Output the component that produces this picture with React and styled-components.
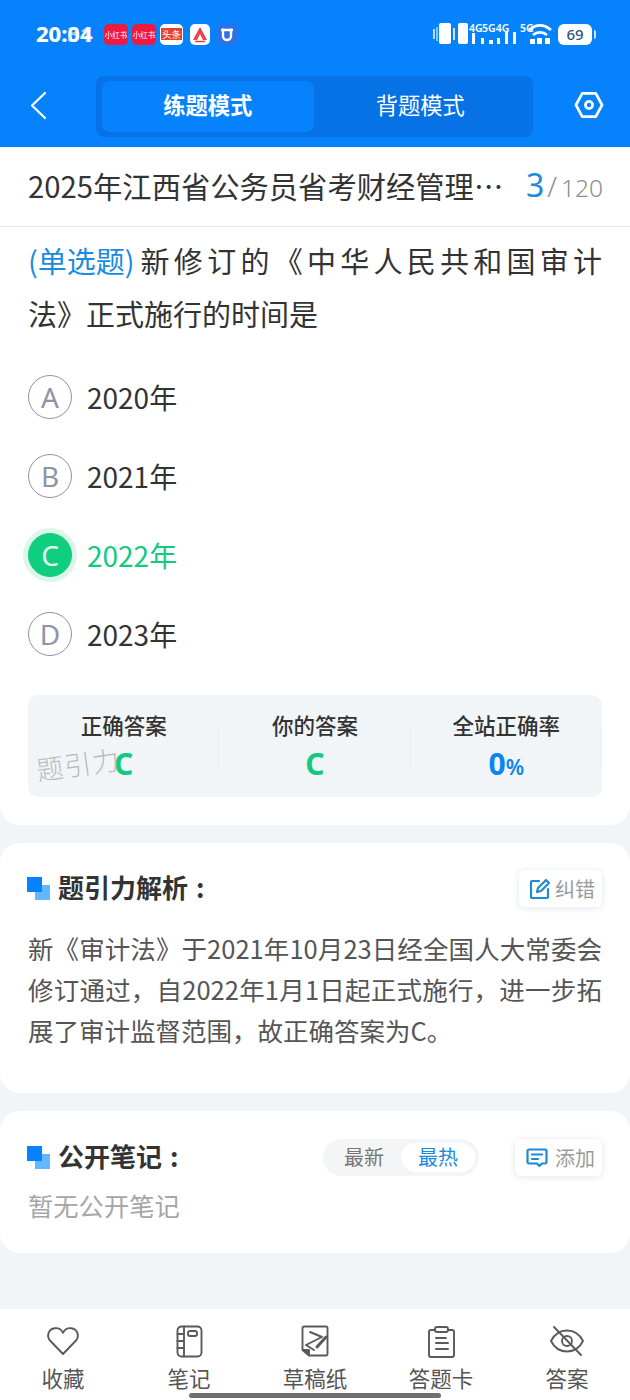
import React from "react";
import styled, { createGlobalStyle } from "styled-components";

const GlobalStyle = createGlobalStyle`
  * { box-sizing: border-box; }
  html, body { margin: 0; padding: 0; background: #f1f5f8; }
  body { font-family: "Noto Sans CJK SC", "Noto Sans", sans-serif; }
`;

const Page = styled.div`
  position: relative;
  width: 630px;
  height: 1400px;
  display: flex;
  flex-direction: column;
  overflow: hidden;
  background: #f1f5f8;
  color: #333;
`;

const Header = styled.header`
  height: 147px;
  background: #0782fd;
  display: flex;
  flex-direction: column;
`;

const StatusBar = styled.div`
  height: 76px;
  padding: 24px 38px 0 36px;
  display: flex;
  align-items: flex-start;
  justify-content: space-between;
`;

const StatusLeft = styled.div`
  display: flex;
  align-items: center;
  height: 20px;
`;

const Time = styled.div`
  position: relative;
  width: 62px;
  margin-right: 6px;
  margin-top: -2px;
  font-family: "Noto Sans", sans-serif;
  font-size: 22px;
  line-height: 20px;
  font-weight: 700;
  color: #fff;
  white-space: nowrap;
`;

const GhostTime = styled.span`
  position: absolute;
  left: 0;
  top: 0;
  opacity: 0.6;
`;

const AppIcons = styled.div`
  display: flex;
  align-items: center;
`;

const AppIcon = styled.div`
  width: ${(p) => p.$w}px;
  height: 21px;
  margin-left: ${(p) => p.$ml || 0}px;
  border-radius: 5px;
  background: ${(p) => p.$bg};
  color: #fff;
  font-size: 7.5px;
  line-height: 21px;
  white-space: nowrap;
  overflow: hidden;
  display: flex;
  align-items: center;
  justify-content: center;
`;

const AppLabel = styled.span`
  padding: 0 1px;
  background: ${(p) => p.$bg || "transparent"};
  font-size: ${(p) => p.$fs || 7.5}px;
  line-height: 12px;
`;

const StatusRight = styled.div`
  display: flex;
  gap: 4px;
  align-items: flex-start;
`;

const StatusGlyphs = styled.svg`
  margin-top: -2px;
`;

const Battery = styled.div`
  position: relative;
  width: 34px;
  height: 21px;
  border-radius: 6px;
  background: #fff;
  color: #2a5580;
  font-family: "Noto Sans", sans-serif;
  font-size: 15px;
  font-weight: 500;
  line-height: 21px;
  text-align: center;

  &::after {
    content: "";
    position: absolute;
    right: -4px;
    top: 6px;
    width: 2px;
    height: 9px;
    border-radius: 0 2px 2px 0;
    background: rgba(255, 255, 255, 0.8);
  }
`;

const NavBar = styled.div`
  height: 71px;
  display: flex;
  align-items: flex-start;
  justify-content: space-between;
  padding: 0 26px 0 30px;
`;

const BackButton = styled.div`
  width: 20px;
  margin-top: 15px;
  display: flex;
`;

const ModeSwitch = styled.div`
  width: 437px;
  height: 61px;
  margin-left: 4px;
  padding: 5px 6px;
  border-radius: 8px;
  background: #0672e6;
  display: flex;
`;

const ModeTab = styled.div`
  flex: 1;
  border-radius: 8px;
  background: ${(p) => (p.$active ? "#0782fd" : "transparent")};
  color: #fff;
  font-size: 22.3px;
  font-weight: ${(p) => (p.$active ? 700 : 400)};
  line-height: 46px;
  text-align: center;
`;

const SettingsButton = styled.div`
  width: 30px;
  margin-top: 15px;
  display: flex;
`;

const TitleRow = styled.div`
  height: 80px;
  padding: 0 27px 4px 28px;
  display: flex;
  align-items: center;
  justify-content: space-between;
  background: #fff;
  border-bottom: 1px solid #e4e6e8;
`;

const PaperTitle = styled.div`
  font-size: 29.3px;
  color: #333;
  white-space: nowrap;
`;

const Progress = styled.div`
  display: flex;
  align-items: baseline;
  font-family: "Noto Sans", sans-serif;
  font-weight: 300;
  color: #8e8e8e;
  font-size: 24.5px;
`;

const ProgressCurrent = styled.span`
  color: #1a8ce0;
  font-size: 32px;
  font-weight: 400;
  margin-right: 3px;
`;

const ProgressSlash = styled.span`
  font-size: 28px;
  margin-right: 4px;
`;

const QuestionCard = styled.section`
  background: #fff;
  border-radius: 0 0 20px 20px;
  padding: 7px 28px 28px;
`;

const QuestionLine = styled.div`
  font-size: 29px;
  line-height: 53px;
  color: #333;
  text-spacing-trim: space-all;
  white-space: nowrap;
`;

const QuestionSpread = styled.div`
  display: flex;
  align-items: baseline;
  gap: 6px;
  font-size: 29px;
  line-height: 53px;
  color: #333;
  text-spacing-trim: space-all;
`;

const QuestionType = styled.span`
  flex: none;
  color: #1a8ce0;
`;

const QuestionStem = styled.span`
  flex: 1;
  text-align: justify;
  text-align-last: justify;
`;

const Options = styled.div`
  margin-top: 17px;
  display: flex;
  flex-direction: column;
`;

const OptionRow = styled.div`
  height: 79px;
  display: flex;
  align-items: center;
  gap: 15px;
  font-size: 28px;
  color: ${(p) => (p.$correct ? "#0fcb7f" : "#333")};
`;

const OptionLetter = styled.div`
  width: 44px;
  height: 44px;
  border-radius: 50%;
  border: 1px solid ${(p) => (p.$correct ? "#0fce7e" : "#8f93a8")};
  background: ${(p) => (p.$correct ? "#0fce7e" : "#fff")};
  box-shadow: ${(p) => (p.$correct ? "0 0 0 5px #dcf7ea" : "none")};
  color: ${(p) => (p.$correct ? "#e8fbf2" : "#8f93a8")};
  display: flex;
  align-items: center;
  justify-content: center;
  font-family: "Noto Sans", sans-serif;
  font-size: 28px;
  font-weight: 400;
`;

const Stats = styled.div`
  position: relative;
  margin-top: 22px;
  height: 102px;
  border-radius: 10px;
  background: #f1f5f8;
  display: grid;
  grid-template-columns: repeat(3, 1fr);
`;

const StatColumn = styled.div`
  position: relative;
  display: flex;
  flex-direction: column;
  align-items: center;
  padding-top: 14px;

  &:not(:last-child)::after {
    content: "";
    position: absolute;
    right: 0;
    top: 32px;
    height: 40px;
    width: 1px;
    background: #e8edf1;
  }
`;

const StatLabel = styled.div`
  font-size: 21.5px;
  line-height: 32px;
  font-weight: 500;
  color: #333;
`;

const StatValue = styled.div`
  margin-top: 5px;
  font-family: "Noto Sans", sans-serif;
  font-size: 30px;
  line-height: 36px;
  font-weight: 700;
  color: ${(p) => p.$color};
`;

const StatUnit = styled.span`
  font-size: 21px;
  font-weight: 600;
`;

const Watermark = styled.div`
  position: absolute;
  left: 8px;
  top: 51px;
  font-size: 27px;
  line-height: 36px;
  font-weight: 300;
  letter-spacing: 1px;
  color: #b9bcbe;
  transform: rotate(-8deg);
`;

const Card = styled.section`
  margin-top: 18px;
  height: ${(p) => p.$height}px;
  padding: ${(p) => p.$top}px 28px 0;
  background: #fff;
  border-radius: 20px;
`;

const CardHead = styled.div`
  display: flex;
  align-items: center;
  justify-content: space-between;
`;

const CardTitle = styled.div`
  display: flex;
  align-items: center;
  font-size: 26px;
  font-weight: 700;
  color: #333;
`;

const TitleMark = styled.div`
  position: relative;
  width: 23px;
  height: 23px;
  margin: 0 8px 0 -1px;

  &::before,
  &::after {
    content: "";
    position: absolute;
    width: 15px;
    height: 15px;
  }
  &::before {
    right: 0;
    bottom: 0;
    background: #62b8ff;
  }
  &::after {
    left: 0;
    top: 0;
    background: #0782fd;
  }
`;

const TitleText = styled.span`
  margin-top: -4px;
`;

const Colon = styled.span`
  margin-left: 8px;
`;

const SmallButton = styled.div`
  width: ${(p) => p.$w}px;
  height: 37px;
  padding-right: 7px;
  border-radius: 6px;
  background: #fff;
  box-shadow: 0 1px 7px rgba(60, 80, 100, 0.14);
  display: flex;
  align-items: center;
  justify-content: flex-end;
  gap: ${(p) => p.$gap}px;
  font-size: 20px;
  color: #9a9a9a;
`;

const Explain = styled.div`
  margin-top: 20px;
  font-size: 25.5px;
  line-height: 41px;
  text-align: justify;
  color: #555;
`;

const NoteTools = styled.div`
  display: flex;
  align-items: center;
  gap: 36px;
`;

const SortPill = styled.div`
  width: 156px;
  height: 37px;
  padding: 4px;
  border-radius: 19px;
  background: #f4f5f6;
  display: flex;
  align-items: center;
`;

const SortOption = styled.div`
  flex: ${(p) => (p.$active ? "0 0 74px" : 1)};
  height: 29px;
  border-radius: 15px;
  background: ${(p) => (p.$active ? "#fff" : "transparent")};
  color: ${(p) => (p.$active ? "#1a8ce0" : "#777")};
  font-size: 20px;
  line-height: 28px;
  text-align: center;
`;

const EmptyNote = styled.div`
  margin-top: 11px;
  font-size: 25.3px;
  line-height: 37px;
  color: #a6a6a6;
`;

const Spacer = styled.div`
  flex: 1;
`;

const BottomBar = styled.nav`
  height: 91px;
  background: #fff;
  display: grid;
  grid-template-columns: repeat(5, 126px);
`;

const BottomItem = styled.div`
  display: flex;
  flex-direction: column;
  align-items: center;
  padding-top: 13px;
  color: #555;
  font-size: 21.5px;
  line-height: 30px;
`;

const BottomIcon = styled.div`
  width: 40px;
  height: 38px;
  margin-bottom: 3px;
  display: flex;
  align-items: center;
  justify-content: center;
`;

const HomeIndicator = styled.div`
  position: absolute;
  left: 189px;
  bottom: 2px;
  width: 252px;
  height: 5px;
  border-radius: 3px;
  background: #707070;
`;

const StatusIcons = () => (
  <StatusGlyphs width="122" height="24" viewBox="0 0 122 24">
    <g fill="#fff">
      <rect x="1" y="7" width="2" height="10" opacity=".7" />
      <rect x="4" y="5" width="2" height="14" opacity=".5" />
      <rect x="7" y="1" width="12" height="21" rx="2" />
      <rect x="21" y="6" width="2" height="12" opacity=".8" />
      <rect x="26" y="1" width="10" height="21" rx="2" />
      <rect x="40" y="11" width="3" height="11" />
      <rect x="49" y="16" width="3" height="6" />
      <rect x="57" y="18" width="4" height="4" />
      <rect x="65" y="16" width="3" height="6" />
      <rect x="73" y="10" width="3" height="12" />
      <rect x="81" y="10" width="3" height="12" />
      <rect x="98" y="17" width="5" height="5" />
      <rect x="105" y="16" width="5" height="6" />
      <rect x="113" y="16" width="5" height="6" />
    </g>
    <g fill="#fff" fontSize="10.500" fontFamily="Noto Sans" fontWeight="600">
      <text x="37" y="10">4G</text>
      <text x="50" y="10">5G4G</text>
      <text x="88" y="10">5G</text>
    </g>
    <g fill="none" stroke="#fff" strokeWidth="2.800">
      <path d="M97 8c7-6 15-6 22 0" />
      <path d="M101 13c4-3.500 10-3.500 14 0" />
    </g>
  </StatusGlyphs>
);

const ico = { fill: "none", stroke: "#5a5a5a", strokeWidth: 1.9, strokeLinecap: "round", strokeLinejoin: "round" };

const HeartIcon = () => (
  <svg width="34" height="30" viewBox="0 0 34 30" {...ico}>
    <path d="M17 28 4 14.500C.5 10.500 2 3 8.800 2.200 12.500 1.800 15.500 3.800 17 6.800 18.500 3.800 21.500 1.800 25.200 2.200 32 3 33.500 10.500 30 14.500Z" />
  </svg>
);

const NotebookIcon = () => (
  <svg width="27" height="33" viewBox="0 0 27 33" {...ico}>
    <rect x="1.500" y="1.500" width="24" height="30" rx="4" />
    <path d="M8 1.500v30M1.500 9h6.500M1.500 16h6.500M1.500 23h6.500" />
    <rect x="12" y="6" width="9" height="5" rx="2" />
  </svg>
);

const DraftIcon = () => (
  <svg width="28" height="32" viewBox="0 0 28 32" {...ico}>
    <path d="M3 1.500h22a1.500 1.500 0 0 1 1.500 1.500v26a1.500 1.500 0 0 1-1.500 1.500H8L1.500 25V3A1.500 1.500 0 0 1 3 1.500Z" />
    <path d="M2 25h6v5Z" fill="#5a5a5a" />
    <path d="M9 7l12 5-16 8 8 5" />
    <path d="M16 22l9-10" strokeWidth="3" />
  </svg>
);

const CardIcon = () => (
  <svg width="29" height="33" viewBox="0 0 29 33" {...ico}>
    <path d="M8 5H4a2 2 0 0 0-2 2v23a2 2 0 0 0 2 2h21a2 2 0 0 0 2-2V7a2 2 0 0 0-2-2h-4" />
    <rect x="8" y="2" width="13" height="5" rx="2" />
    <path d="M9 13h10M9 18h12M9 24h12" />
  </svg>
);

const EyeOffIcon = () => (
  <svg width="36" height="30" viewBox="0 0 36 30" {...ico}>
    <path d="M2 15C6 7 11 4.500 18 4.500S30 7 34 15c-4 8-9 10.500-16 10.500S6 23 2 15Z" />
    <circle cx="18" cy="15" r="5" />
    <path d="M5 1l27 28" />
  </svg>
);

const EditIcon = () => (
  <svg width="22" height="22" viewBox="0 0 22 22" fill="none" stroke="#1d8ad6" strokeWidth="2.200" strokeLinecap="round" strokeLinejoin="round">
    <path d="M11 3H4a1 1 0 0 0-1 1v15a1 1 0 0 0 1 1h15a1 1 0 0 0 1-1v-8" />
    <path d="M9 14l1-4 8-8 3 3-8 8Z" />
  </svg>
);

const CommentIcon = () => (
  <svg width="22" height="20" viewBox="0 0 22 20" fill="none" stroke="#1d8ad6" strokeWidth="2.200" strokeLinecap="round" strokeLinejoin="round">
    <path d="M3 1.500h16A1.500 1.500 0 0 1 20.500 3v11a1.500 1.500 0 0 1-1.500 1.500h-3L13.500 18 11 15.500H3A1.500 1.500 0 0 1 1.500 14V3A1.500 1.500 0 0 1 3 1.500Z" />
    <path d="M6 6.500h10M6 11h6" />
  </svg>
);

const options = [
  { letter: "A", text: "2020年" },
  { letter: "B", text: "2021年" },
  { letter: "C", text: "2022年", correct: true },
  { letter: "D", text: "2023年" },
];

const tabs = [
  { label: "收藏", icon: <HeartIcon /> },
  { label: "笔记", icon: <NotebookIcon /> },
  { label: "草稿纸", icon: <DraftIcon /> },
  { label: "答题卡", icon: <CardIcon /> },
  { label: "答案", icon: <EyeOffIcon /> },
];

export default function App() {
  return (
    <Page>
      <GlobalStyle />
      <Header>
        <StatusBar>
          <StatusLeft>
            <Time>
              20:04
              <GhostTime>20:31</GhostTime>
            </Time>
            <AppIcons>
              <AppIcon $bg="#f0193f" $w={24}>小红书</AppIcon>
              <AppIcon $bg="#f0193f" $w={24} $ml={4}>小红书</AppIcon>
              <AppIcon $bg="#fff" $w={23} $ml={4}>
                <AppLabel $bg="#e8412f" $fs={9.5}>头条</AppLabel>
              </AppIcon>
              <AppIcon $bg="#fff" $w={20} $ml={7}>
                <svg width="16" height="17" viewBox="0 0 16 17">
                  <path d="M8 1 15 14H11L8 8 5 14H1Z" fill="#ee3f4d" />
                  <path d="M3 15.500h10" stroke="#ee3f4d" strokeWidth="1.500" />
                </svg>
              </AppIcon>
              <AppIcon $bg="#2f6fe8" $w={20} $ml={7}>
                <svg width="14" height="15" viewBox="0 0 14 15" fill="none" stroke="#fff" strokeWidth="2.400">
                  <path d="M3 1.500V9a4 4 0 0 0 8 0V1.500M1 3h12" />
                </svg>
              </AppIcon>
            </AppIcons>
          </StatusLeft>
          <StatusRight>
            <StatusIcons />
            <Battery>69</Battery>
          </StatusRight>
        </StatusBar>
        <NavBar>
          <BackButton>
            <svg width="18" height="30" viewBox="0 0 18 30" fill="none" stroke="#fff" strokeWidth="2.300" strokeLinecap="round" strokeLinejoin="round">
              <path d="M15 2 2 14.500 15 27" />
            </svg>
          </BackButton>
          <ModeSwitch>
            <ModeTab $active>练题模式</ModeTab>
            <ModeTab>背题模式</ModeTab>
          </ModeSwitch>
          <SettingsButton>
            <svg width="31" height="28" viewBox="0 0 31 28" fill="none" stroke="#fff" strokeWidth="2.800" strokeLinejoin="round">
              <path d="M8.500 2h14L29 14l-6.500 12h-14L2 14Z" />
              <circle cx="15.500" cy="14" r="3.700" />
            </svg>
          </SettingsButton>
        </NavBar>
      </Header>

      <TitleRow>
        <PaperTitle>2025年江西省公务员省考财经管理…</PaperTitle>
        <Progress>
          <ProgressCurrent>3</ProgressCurrent>
          <ProgressSlash>/</ProgressSlash>
          120
        </Progress>
      </TitleRow>

      <QuestionCard>
        <QuestionSpread>
          <QuestionType>(单选题)</QuestionType>
          <QuestionStem>新修订的《中华人民共和国审计</QuestionStem>
        </QuestionSpread>
        <QuestionLine>法》正式施行的时间是</QuestionLine>
        <Options>
          {options.map((o) => (
            <OptionRow key={o.letter} $correct={o.correct}>
              <OptionLetter $correct={o.correct}>{o.letter}</OptionLetter>
              {o.text}
            </OptionRow>
          ))}
        </Options>
        <Stats>
          <StatColumn>
            <StatLabel>正确答案</StatLabel>
            <StatValue $color="#0fcb7f">C</StatValue>
          </StatColumn>
          <StatColumn>
            <StatLabel>你的答案</StatLabel>
            <StatValue $color="#0fcb7f">C</StatValue>
          </StatColumn>
          <StatColumn>
            <StatLabel>全站正确率</StatLabel>
            <StatValue $color="#0a84f0">
              0<StatUnit>%</StatUnit>
            </StatValue>
          </StatColumn>
          <Watermark>题引力</Watermark>
        </Stats>
      </QuestionCard>

      <Card $top={27} $height={250}>
        <CardHead>
          <CardTitle>
            <TitleMark />
            <TitleText>
              题引力解析<Colon>:</Colon>
            </TitleText>
          </CardTitle>
          <SmallButton $w={83} $gap={5}>
            <EditIcon />
            纠错
          </SmallButton>
        </CardHead>
        <Explain>
          新《审计法》于2021年10月23日经全国人大常委会修订通过，自2022年1月1日起正式施行，进一步拓展了审计监督范围，故正确答案为C。
        </Explain>
      </Card>

      <Card $top={28} $height={142}>
        <CardHead>
          <CardTitle>
            <TitleMark />
            <TitleText>
              公开笔记<Colon>:</Colon>
            </TitleText>
          </CardTitle>
          <NoteTools>
            <SortPill>
              <SortOption>最新</SortOption>
              <SortOption $active>最热</SortOption>
            </SortPill>
            <SmallButton $w={87} $gap={7}>
              <CommentIcon />
              添加
            </SmallButton>
          </NoteTools>
        </CardHead>
        <EmptyNote>暂无公开笔记</EmptyNote>
      </Card>

      <Spacer />

      <BottomBar>
        {tabs.map((t) => (
          <BottomItem key={t.label}>
            <BottomIcon>{t.icon}</BottomIcon>
            {t.label}
          </BottomItem>
        ))}
      </BottomBar>
      <HomeIndicator />
    </Page>
  );
}
